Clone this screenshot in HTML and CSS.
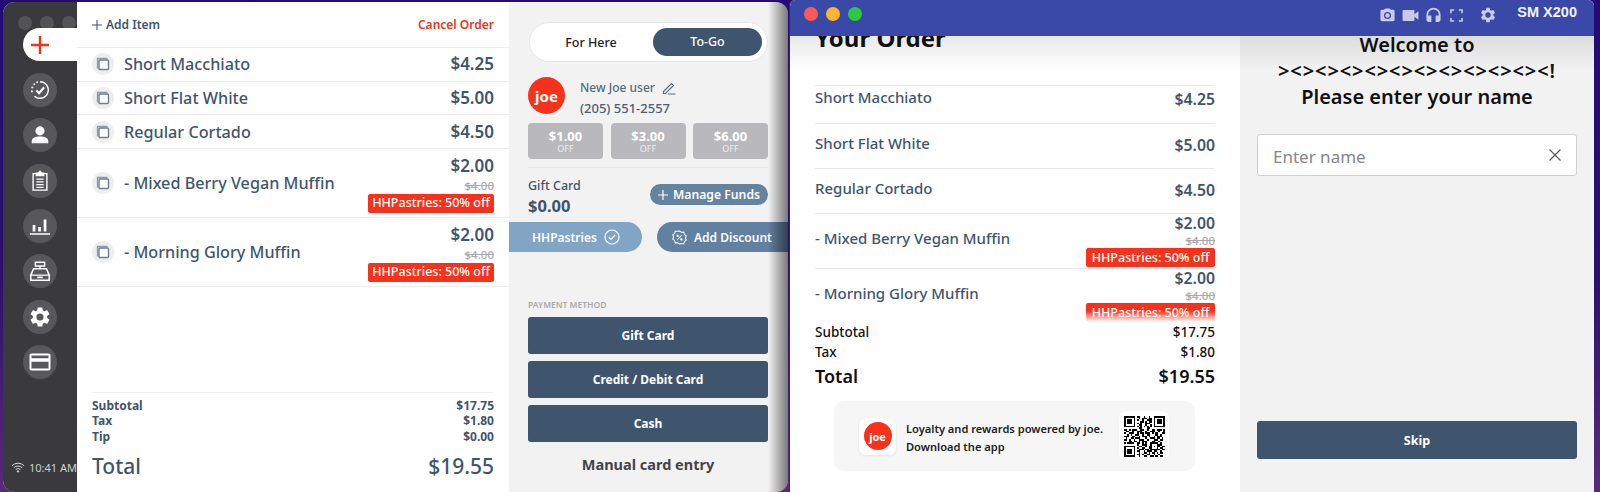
FILE: index.html
```html
<!DOCTYPE html>
<html lang="en">
<head>
<meta charset="utf-8">
<title>Joe POS</title>
<link rel="stylesheet" href="styles.css">
</head>
<body>
<div class="desktop">
  <section class="window pos">
    <nav class="rail">
      <div class="dots"><i></i><i></i><i></i></div>
      <div class="plus-tab"><svg viewBox="0 0 20 20" width="20" height="20"><path d="M10 1v18M1 10h18" stroke="#f5321c" stroke-width="2.4" fill="none"/></svg></div>
      <div class="rail-btns">
        <a class="rail-btn"><svg viewBox="0 0 24 24" width="22" height="22" fill="none" stroke="#fff" stroke-width="1.5"><path d="M12 3a9 9 0 1 1-6 15.7" /><path d="M3.2 13.5v-.1M3.6 9.2v-.1M5.8 5.8v-.1M9 3.6v-.1" stroke-width="2" stroke-linecap="round"/><path d="M8 12.5l3 3 5.5-6.5" stroke-width="2.2"/></svg></a>
        <a class="rail-btn"><svg viewBox="0 0 24 24" width="22" height="22" fill="#fff"><circle cx="12" cy="7.5" r="5"/><path d="M3 21v-2.5c0-3.500 4-5 9-5s9 1.500 9 5V21z"/></svg></a>
        <a class="rail-btn"><svg viewBox="0 0 24 24" width="22" height="22" fill="none" stroke="#fff" stroke-width="1.5"><path d="M8 4H4.500v18h15V4H16"/><path d="M8 6V3.500h2.200L12 1.500l1.800 2H16V6z" fill="#fff"/><path d="M8 10h8M8 13h8M8 16h8M8 19h8"/></svg></a>
        <a class="rail-btn"><svg viewBox="0 0 24 24" width="22" height="22" fill="#fff"><path d="M1 20h22v1.500H1zM4 11h3v7H4zM10 13h3v5h-3zM16 5h3v13h-3z"/></svg></a>
        <a class="rail-btn"><svg viewBox="0 0 24 24" width="22" height="22" fill="none" stroke="#fff" stroke-width="1.6"><path d="M7 2.500h10v4H7zM12 6.500v3M5 9.500h14l3 7H2zM2 16.500h20V22H2z"/><path d="M9 19h6" stroke-width="2"/></svg></a>
        <a class="rail-btn"><svg viewBox="0 0 24 24" width="24" height="24" fill="#fff"><path fill-rule="evenodd" d="M19.14 12.94c.04-.3.06-.61.06-.94 0-.32-.02-.64-.07-.94l2.03-1.58a.49.49 0 0 0 .12-.61l-1.92-3.32a.49.49 0 0 0-.59-.22l-2.39.96c-.5-.38-1.03-.7-1.62-.94l-.36-2.54a.48.48 0 0 0-.48-.41h-3.84c-.24 0-.43.17-.47.41l-.36 2.54c-.59.24-1.13.57-1.62.94l-2.39-.96a.49.49 0 0 0-.59.22L2.74 8.87c-.12.21-.08.47.12.61l2.03 1.58c-.05.3-.09.63-.09.94s.02.64.07.94l-2.03 1.58a.49.49 0 0 0-.12.61l1.92 3.32c.12.22.37.29.59.22l2.39-.96c.5.38 1.03.7 1.62.94l.36 2.54c.05.24.24.41.48.41h3.84c.24 0 .44-.17.47-.41l.36-2.54c.59-.24 1.13-.56 1.62-.94l2.39.96c.22.08.47 0 .59-.22l1.92-3.32a.47.47 0 0 0-.12-.61zM12 15.6A3.6 3.6 0 1 1 12 8.400a3.600 3.600 0 0 1 0 7.200z"/></svg></a>
        <a class="rail-btn"><svg viewBox="0 0 24 24" width="24" height="24" fill="none" stroke="#fff" stroke-width="2"><rect x="2.5" y="4.5" width="19" height="15" rx="1"/><path d="M2.500 10h19" stroke-width="3.5"/></svg></a>
      </div>
      <div class="status">
        <svg viewBox="0 0 16 12" width="14" height="11" fill="none" stroke="#ddd" stroke-width="1.1"><path d="M1 4a10 10 0 0 1 14 0M3.200 6.200a7 7 0 0 1 9.600 0M5.300 8.300a4 4 0 0 1 5.400 0"/><circle cx="8" cy="10.500" r=".8" fill="#ddd"/></svg>
        <span>10:41 AM</span>
      </div>
    </nav>

    <main class="ticket">
      <header class="ticket-head">
        <span class="add"><svg viewBox="0 0 11 11" width="10" height="10"><path d="M5.500 0v11M0 5.500h11" stroke="#3f556d" stroke-width="1.2" fill="none"/></svg>Add Item</span>
        <span class="cancel">Cancel Order</span>
      </header>
      <div class="t-row">
        <span class="copy"><svg viewBox="0 0 14 14" width="14" height="14" fill="none"><path d="M1.500 11.500V1.500h10" stroke="#8c99a6" stroke-width="1.3"/><rect x="3" y="3" width="9.500" height="9.500" rx="1" fill="#fff" stroke="#6d7f91" stroke-width="1.4"/></svg></span>
        <span class="t-name">Short Macchiato</span><span class="t-price">$4.25</span>
      </div>
      <div class="t-row">
        <span class="copy"><svg viewBox="0 0 14 14" width="14" height="14" fill="none"><path d="M1.500 11.500V1.500h10" stroke="#8c99a6" stroke-width="1.3"/><rect x="3" y="3" width="9.500" height="9.500" rx="1" fill="#fff" stroke="#6d7f91" stroke-width="1.4"/></svg></span>
        <span class="t-name">Short Flat White</span><span class="t-price">$5.00</span>
      </div>
      <div class="t-row">
        <span class="copy"><svg viewBox="0 0 14 14" width="14" height="14" fill="none"><path d="M1.500 11.500V1.500h10" stroke="#8c99a6" stroke-width="1.3"/><rect x="3" y="3" width="9.500" height="9.500" rx="1" fill="#fff" stroke="#6d7f91" stroke-width="1.4"/></svg></span>
        <span class="t-name">Regular Cortado</span><span class="t-price">$4.50</span>
      </div>
      <div class="t-row t-tall">
        <span class="copy"><svg viewBox="0 0 14 14" width="14" height="14" fill="none"><path d="M1.500 11.500V1.500h10" stroke="#8c99a6" stroke-width="1.3"/><rect x="3" y="3" width="9.500" height="9.500" rx="1" fill="#fff" stroke="#6d7f91" stroke-width="1.4"/></svg></span>
        <span class="t-name">- Mixed Berry Vegan Muffin</span>
        <div class="t-deal"><span class="t-price">$2.00</span><s>$4.00</s><span class="badge">HHPastries: 50% off</span></div>
      </div>
      <div class="t-row t-tall">
        <span class="copy"><svg viewBox="0 0 14 14" width="14" height="14" fill="none"><path d="M1.500 11.500V1.500h10" stroke="#8c99a6" stroke-width="1.3"/><rect x="3" y="3" width="9.500" height="9.500" rx="1" fill="#fff" stroke="#6d7f91" stroke-width="1.4"/></svg></span>
        <span class="t-name">- Morning Glory Muffin</span>
        <div class="t-deal"><span class="t-price">$2.00</span><s>$4.00</s><span class="badge">HHPastries: 50% off</span></div>
      </div>
      <div class="t-sum">
        <div class="sum-line"><span>Subtotal</span><span>$17.75</span></div>
        <div class="sum-line"><span>Tax</span><span>$1.80</span></div>
        <div class="sum-line"><span>Tip</span><span>$0.00</span></div>
        <div class="sum-total"><span>Total</span><span>$19.55</span></div>
      </div>
    </main>

    <aside class="side">
      <div class="toggle"><span class="tg">For Here</span><span class="tg tg-on">To-Go</span></div>
      <div class="user">
        <span class="joe joe-lg">joe</span>
        <div class="user-info">
          <div class="user-name">New Joe user <svg viewBox="0 0 14 14" width="14" height="14" fill="none" stroke="#566b80" stroke-width="1.1"><path d="M1.500 10.500 9.500 2.500l2 2-8 8H1.500zM6 13h7.500"/></svg></div>
          <div class="user-phone">(205) 551-2557</div>
        </div>
      </div>
      <div class="rewards">
        <div class="reward"><b>$1.00</b><small>OFF</small></div>
        <div class="reward"><b>$3.00</b><small>OFF</small></div>
        <div class="reward"><b>$6.00</b><small>OFF</small></div>
      </div>
      <div class="gift">
        <div><div class="gift-label">Gift Card</div><div class="gift-value">$0.00</div></div>
        <span class="manage"><svg viewBox="0 0 11 11" width="10" height="10"><path d="M5.500 0v11M0 5.500h11" stroke="#fff" stroke-width="1.3" fill="none"/></svg>Manage Funds</span>
      </div>
      <div class="promos">
        <span class="promo promo-on">HHPastries <svg viewBox="0 0 16 16" width="16" height="16" fill="none" stroke="#fff" stroke-width="1.2"><circle cx="8" cy="8" r="7"/><path d="M4.800 8.200l2.200 2.200 4.200-4.600"/></svg></span>
        <span class="promo promo-add"><svg viewBox="0 0 16 16" width="15" height="15" fill="none" stroke="#fff" stroke-width="1.1"><path d="M8 1l2 1.400 2.500-.1.700 2.400 2 1.500-.9 2.300.9 2.300-2 1.500-.7 2.400-2.500-.1L8 15l-2-1.400-2.500.1-.7-2.400-2-1.500.9-2.300-.9-2.300 2-1.500.7-2.400 2.500.1z"/><path d="M5.800 10.200l4.400-4.400"/><circle cx="6" cy="6" r=".7"/><circle cx="10" cy="10" r=".7"/></svg>Add Discount</span>
      </div>
      <div class="pay-label">PAYMENT METHOD</div>
      <div class="pay-list">
        <button class="pay">Gift Card</button>
        <button class="pay">Credit / Debit Card</button>
        <button class="pay">Cash</button>
      </div>
      <div class="manual">Manual card entry</div>
    </aside>
  </section>

  <section class="window customer">
    <header class="bar">
      <div class="lights"><i class="l-red"></i><i class="l-amber"></i><i class="l-green"></i></div>
      <div class="tools">
        <svg class="tool" viewBox="0 0 24 24" width="17" height="17"><path fill-rule="evenodd" d="M9 2 7.170 4H4a2 2 0 0 0-2 2v12a2 2 0 0 0 2 2h16a2 2 0 0 0 2-2V6a2 2 0 0 0-2-2h-3.170L15 2zm3 15a5 5 0 1 1 0-10 5 5 0 0 1 0 10zm0-1.800a3.200 3.200 0 1 0 0-6.400 3.200 3.200 0 0 0 0 6.400z"/></svg>
        <svg class="tool" viewBox="0 0 24 24" width="19" height="19"><path d="M17 10.500V6a1 1 0 0 0-1-1H3a1 1 0 0 0-1 1v12a1 1 0 0 0 1 1h13a1 1 0 0 0 1-1v-4.500l5 4v-11z"/></svg>
        <svg class="tool" viewBox="0 0 24 24" width="17" height="17"><path d="M12 1a10 10 0 0 0-10 10v7a3 3 0 0 0 3 3h4v-9H4.500v-1a7.500 7.500 0 0 1 15 0v1H15v9h4a3 3 0 0 0 3-3v-7A10 10 0 0 0 12 1z"/></svg>
        <svg class="tool" viewBox="0 0 24 24" width="19" height="19"><path d="M6 15H4v5h5v-2H6zM4 9h2V6h3V4H4zm14 9h-3v2h5v-5h-2zM15 4v2h3v3h2V4z"/></svg>
        <svg class="tool tool-gear" viewBox="0 0 24 24" width="18" height="18"><path fill-rule="evenodd" d="M19.14 12.94c.04-.3.06-.61.06-.94 0-.32-.02-.64-.07-.94l2.03-1.58a.49.49 0 0 0 .12-.61l-1.92-3.32a.49.49 0 0 0-.59-.22l-2.39.96c-.5-.38-1.03-.7-1.62-.94l-.36-2.54a.48.48 0 0 0-.48-.41h-3.84c-.24 0-.43.17-.47.41l-.36 2.54c-.59.24-1.13.57-1.62.94l-2.39-.96a.49.49 0 0 0-.59.22L2.74 8.87c-.12.21-.08.47.12.61l2.03 1.58c-.05.3-.09.63-.09.94s.02.64.07.94l-2.03 1.58a.49.49 0 0 0-.12.61l1.92 3.32c.12.22.37.29.59.22l2.39-.96c.5.38 1.03.7 1.62.94l.36 2.54c.05.24.24.41.48.41h3.84c.24 0 .44-.17.47-.41l.36-2.54c.59-.24 1.13-.56 1.62-.94l2.39.96c.22.08.47 0 .59-.22l1.92-3.32a.47.47 0 0 0-.12-.61zM12 15.600A3.600 3.600 0 1 1 12 8.400a3.600 3.600 0 0 1 0 7.200z"/></svg>
        <span class="device">SM X200</span>
      </div>
    </header>
    <div class="panes">
      <div class="order">
        <h1>Your Order</h1>
        <div class="o-list">
          <div class="o-row o-first"><span>Short Macchiato</span><span class="o-price">$4.25</span></div>
          <div class="o-row"><span>Short Flat White</span><span class="o-price">$5.00</span></div>
          <div class="o-row"><span>Regular Cortado</span><span class="o-price">$4.50</span></div>
          <div class="o-row o-deal o-deal-a"><span class="o-dname">- Mixed Berry Vegan Muffin</span>
            <div class="o-dcol"><span class="o-price">$2.00</span><s>$4.00</s><span class="badge">HHPastries: 50% off</span></div></div>
          <div class="o-row o-deal"><span class="o-dname">- Morning Glory Muffin</span>
            <div class="o-dcol"><span class="o-price">$2.00</span><s>$4.00</s><span class="badge">HHPastries: 50% off</span></div></div>
        </div>
        <div class="o-line"><span>Subtotal</span><span>$17.75</span></div>
        <div class="o-line"><span>Tax</span><span>$1.80</span></div>
        <div class="o-total"><span>Total</span><span>$19.55</span></div>
        <div class="promo-card">
          <span class="tile"><span class="joe joe-sm">joe</span></span>
          <p>Loyalty and rewards powered by joe.<br>Download the app</p>
          <span class="qr"><svg viewBox="0 0 25 25" width="41" height="41" shape-rendering="crispEdges"><path fill-rule="evenodd" d="M0 0h7v7H0zM1 1v5h5V1zM2 2h3v3H2zM18 0h7v7h-7zM19 1v5h5V1zM20 2h3v3h-3zM0 18h7v7H0zM1 19v5h5v-5zM2 20h3v3H2zM16 16h5v5h-5zM17 17v3h3v-3zM18 18h1v1h-1z"/><path stroke="#000" stroke-width="1" fill="none" d="M8 .5h2m2 0h1m2 0h1M9 1.500h1m1 0h3m1 0h2M8 2.500h1m2 0h1m2 0h3M10 3.500h2m1 0h1m1 0h2M8 4.500h1m1 0h1m2 0h3M9 5.500h2m2 0h1m2 0h1M8 6.500h1m1 0h1m1 0h1m1 0h1m1 0h1M9 7.500h2m3 0h2M0 8.500h2m1 0h1m1 0h3m2 0h2m2 0h1m2 0h2m1 0h3m1 0h1M1 9.500h2m2 0h1m2 0h3m2 0h1m2 0h3m2 0h1m2 0h2M0 10.500h1m2 0h3m2 0h1m1 0h2m1 0h3m1 0h1m1 0h2m2 0h2M2 11.500h1m1 0h1m2 0h2m2 0h1m2 0h2m3 0h2m1 0h1M0 12.500h3m2 0h2m2 0h1m1 0h3m1 0h1m2 0h1m1 0h3M1 13.500h1m2 0h2m1 0h3m3 0h1m2 0h3m1 0h2m1 0h1M0 14.500h2m1 0h1m2 0h1m2 0h3m2 0h1m3 0h3m1 0h2M3 15.500h2m1 0h2m1 0h1m1 0h3m3 0h2m2 0h1M0 16.500h1m1 0h4m2 0h2m1 0h1m1 0h1m6 0h1m1 0h1M8 17.500h1m2 0h3m7 0h2M9 18.500h2m2 0h1m1 0h1m5 0h1m1 0h2M8 19.500h1m2 0h2m2 0h1m6 0h2M9 20.500h3m1 0h2m6 0h1m1 0h2M8 21.500h2m2 0h1m1 0h3m1 0h2m2 0h1M9 22.500h1m2 0h2m1 0h1m1 0h2m1 0h1m1 0h2M8 23.500h2m1 0h1m2 0h2m2 0h1m2 0h1M9 24.500h1m2 0h2m2 0h2m1 0h2m1 0h2"/></svg></span>
        </div>
      </div>
      <div class="welcome">
        <h2><span class="w-first">Welcome to</span><span class="w-fish">&gt;&lt;&gt;&lt;&gt;&lt;&gt;&lt;&gt;&lt;&gt;&lt;&gt;&lt;&gt;&lt;&gt;&lt;&gt;&lt;&gt;&lt;!</span><span class="w-line">Please enter your name</span></h2>
        <div class="field"><span>Enter name</span><svg viewBox="0 0 12 12" width="12" height="12"><path d="M.5.5l11 11M11.500.5l-11 11" stroke="#555" stroke-width="1.1" fill="none"/></svg></div>
        <button class="skip">Skip</button>
      </div>
    </div>
  </section>
</div>
</body>
</html>
```
FILE: styles.css
```css
* { box-sizing: border-box; }
html, body { margin: 0; height: 100%; }
body { font-family: "Noto Sans", "Liberation Sans", sans-serif; color: #3f556d; overflow: hidden; }
.desktop { position: relative; width: 1600px; height: 492px; overflow: hidden; background: linear-gradient(180deg, #240a78 0%, #2a0f70 55%, #5a2a7c 100%); }
.window { position: absolute; overflow: hidden; }

/* left POS window */
.pos { left: 3px; top: 2px; width: 785px; height: 490px; border-radius: 12px; display: flex; background: #f2f2f2; }
.pos::after { content: ""; position: absolute; top: 0; right: 0; bottom: 0; width: 20px; background: linear-gradient(90deg, rgba(0,0,0,0), rgba(0,0,0,.5)); pointer-events: none; }
.rail { width: 74px; flex: none; background: #3a393e; display: flex; flex-direction: column; padding-top: 14px; }
.dots { display: flex; gap: 8px; padding-left: 15px; margin-bottom: -2px; white-space: nowrap; }
.dots i { flex: none; width: 14px; height: 14px; border-radius: 50%; background: #545358; }
.plus-tab { margin-left: 20px; height: 33px; background: #fff; border-radius: 17px 0 0 17px; display: flex; align-items: center; padding-left: 7px; position: relative; }
.rail-btns { display: flex; flex-direction: column; gap: 11.33px; margin-top: 12px; }
.rail-btn { width: 34px; height: 34px; margin-left: 20px; border-radius: 50%; background: #58575c; display: flex; align-items: center; justify-content: center; }
.status { margin-top: auto; padding: 0 0 18px 8px; display: flex; align-items: center; gap: 4px; height: 32px; white-space: nowrap; color: #d0d0d2; font-size: 11px; }

.ticket { width: 432px; flex: none; background: #fff; display: flex; flex-direction: column; }
.ticket-head { height: 46px; flex: none; padding: 0 15px; display: flex; justify-content: space-between; align-items: center; border-bottom: 1.5px solid #ececec; font-size: 12px; font-weight: 600; }
.add { display: flex; align-items: center; gap: 4px; }
.cancel { color: #e8351f; }
.t-row { height: 33.7px; flex: none; padding: 0 15px; display: flex; align-items: center; border-bottom: 1.5px solid #ececec; }
.t-tall { height: 69px; }
.copy { width: 22px; height: 22px; flex: none; border-radius: 50%; background: #eeeeee; display: flex; align-items: center; justify-content: center; margin-right: 10px; }
.t-name { flex: 1; font-size: 16.2px; font-weight: 500; white-space: nowrap; }
.t-price { font-size: 17px; font-weight: 600; line-height: 22px; }
.t-deal { display: flex; flex-direction: column; align-items: flex-end; align-self: flex-start; padding-top: 6px; }
.t-deal s { font-size: 11.5px; color: #a9a9ad; line-height: 17px; font-weight: 500; }
.badge { background: #f6321c; color: #fff; border-radius: 2px; white-space: nowrap; font-weight: 500; }
.t-deal .badge { height: 18.5px; line-height: 18.5px; width: 126px; text-align: center; font-size: 12.5px; }
.t-sum { margin: auto 15px 0; border-top: 1px solid #eeeeee; padding: 5px 0 12px; }
.sum-line { display: flex; justify-content: space-between; font-size: 12px; font-weight: 700; line-height: 15.5px; }
.sum-total { display: flex; justify-content: space-between; font-size: 21px; font-weight: 500; line-height: 28px; margin-top: 8px; }

.side { flex: 1; min-width: 0; padding: 20px 0 0 19px; }
.side > * { width: 240px; }
.toggle { height: 40px; margin-left: 1px; width: 239px; border: 1.5px solid #e6e6e6; border-radius: 20px; background: #fff; display: flex; align-items: center; padding: 0 5px 0 14px; }
.tg { flex: 1; text-align: center; font-size: 12.5px; color: #222; font-weight: 500; }
.tg-on { flex: none; width: 109px; height: 28px; line-height: 28px; border-radius: 14px; background: #3f556d; color: #fff; margin-left: 15px; }
.user { display: flex; align-items: center; margin-top: 15px; height: 37px; }
.joe { border-radius: 50%; background: #f6321c; color: #fff; font-weight: 700; display: flex; align-items: center; justify-content: center; flex: none; }
.joe-lg { width: 37px; height: 37px; font-size: 15px; }
.user-info { margin-left: 15px; padding-top: 6px; }
.user-name { font-size: 12px; font-weight: 500; color: #566b80; line-height: 20px; display: flex; align-items: center; gap: 7px; }
.user-phone { font-size: 13px; color: #4a5f75; line-height: 21px; font-weight: 500; }
.rewards { display: flex; justify-content: space-between; margin-top: 9px; }
.reward { width: 75px; height: 36px; border-radius: 4px; background: #b9b8bc; color: #fff; display: flex; flex-direction: column; align-items: center; justify-content: center; padding-top: 1px; }
.reward b { font-size: 13px; line-height: 14px; font-weight: 700; }
.reward small { font-size: 9px; line-height: 11px; color: #eee; }
.gift { margin-top: 8px; border-top: 1px solid #e6e6e6; padding-top: 9px; display: flex; justify-content: space-between; align-items: center; height: 49px; }
.gift-label { font-size: 12.5px; line-height: 18px; font-weight: 500; }
.gift-value { font-size: 16.5px; font-weight: 700; line-height: 22px; }
.manage { width: 118px; height: 21px; margin-top: -4px; border-radius: 11px; background: #65829f; color: #fff; font-size: 12.2px; font-weight: 600; display: flex; align-items: center; justify-content: center; gap: 5px; white-space: nowrap; }
.promos { display: flex; margin: 6px 0 0 -19px; width: 300px; }
.promo { height: 30px; flex: none; color: #fff; font-size: 12px; font-weight: 600; display: flex; align-items: center; white-space: nowrap; }
.promo-on { width: 133px; background: #82a5c6; border-radius: 0 15px 15px 0; padding-left: 23px; gap: 7px; }
.promo-add { width: 160px; margin-left: 15px; background: #62809f; border-radius: 15px 0 0 15px; padding-left: 15px; gap: 7px; }
.pay-label { margin-top: 47px; font-size: 8.5px; line-height: 12px; color: #a8a8ac; font-weight: 600; }
.pay-list { margin-top: 6px; display: flex; flex-direction: column; gap: 7.5px; }
.pay { height: 36.5px; border: 0; border-radius: 3px; background: #3f556d; color: #fff; font: 700 12px "Noto Sans", "Liberation Sans", sans-serif; }
.manual { margin-top: 12px; line-height: 20px; text-align: center; font-size: 14.5px; font-weight: 700; color: #444448; }

/* right customer window */
.customer { left: 789px; top: 0; width: 805px; height: 492px; border-radius: 6px 6px 0 0; background: #fff; border-left: 1px solid #333; display: flex; flex-direction: column; }
.bar { height: 36px; flex: none; background: #3a48a8; display: flex; justify-content: space-between; padding: 7px 17px 0 14px; position: relative; z-index: 2; }
.lights { display: flex; gap: 8px; }
.lights i { width: 14px; height: 14px; border-radius: 50%; }
.l-red { background: #fa5a56; }
.l-amber { background: #fdb52a; }
.l-green { background: #2bc840; }
.tools { display: flex; align-items: center; height: 16px; margin-top: -2px; }
.tool { fill: #c6cbe8; margin-left: 5px; margin-top: 4px; }
.tool-gear { margin-left: 13px; }
.device { margin-left: 20px; font: 700 14.5px "Liberation Sans", sans-serif; color: #f2f3fb; margin-top: -3px; }
.panes { flex: 1; min-height: 0; display: flex; position: relative; }
.panes::before { content: ""; position: absolute; left: 0; right: 0; top: 0; height: 34px; background: linear-gradient(180deg, rgba(0,0,0,.09), rgba(0,0,0,0)); pointer-events: none; z-index: 1; }
.order { width: 450px; flex: none; background: #fff; padding: 0 25px; overflow: hidden; }
.order h1 { margin: -14px 0 0; font-size: 24px; line-height: 31px; font-weight: 700; color: #111; }
.o-list { margin-top: 32px; height: 237px; overflow: hidden; position: relative; }
.o-list::after { content: ""; position: absolute; left: 0; right: 0; bottom: 0; height: 11px; background: linear-gradient(180deg, rgba(255,255,255,0), #fff); }
.o-row { display: flex; justify-content: space-between; border-top: 1.5px solid #e8e8e8; height: 45px; padding-top: 9px; font-size: 15px; font-weight: 500; line-height: 20px; white-space: nowrap; }
.o-first { height: 38px; padding-top: 1px; }
.o-price { font-size: 15.8px; font-weight: 600; margin-top: 2px; }
.o-deal { height: 54px; padding-top: 0; }
.o-deal-a { height: 55px; padding-top: 0; }
.o-dname { align-self: center; margin-top: -6px; }
.o-dcol { display: flex; flex-direction: column; align-items: flex-end; margin-top: -1px; }
.o-dcol .o-price { margin-top: 0; line-height: 20px; }
.o-dcol s { font-size: 11.5px; line-height: 14px; color: #a9a9ad; margin-top: 1px; }
.o-dcol .badge { width: 129px; height: 19px; line-height: 19px; text-align: center; font-size: 12.5px; }
.o-line { display: flex; justify-content: space-between; color: #111; font-size: 13.5px; font-weight: 500; line-height: 20px; }
.o-total { display: flex; justify-content: space-between; color: #111; font-size: 18px; font-weight: 600; line-height: 28px; }
.promo-card { margin: 11px 0 0 19px; width: 361px; height: 70px; border-radius: 10px; background: #f6f6f6; display: flex; align-items: center; padding-left: 25px; position: relative; }
.tile { width: 37px; height: 37px; flex: none; background: #fff; border-radius: 7px; box-shadow: 0 1px 3px rgba(0,0,0,.08); display: flex; align-items: center; justify-content: center; }
.joe-sm { width: 28px; height: 28px; font-size: 11px; }
.promo-card p { margin: 4px 0 0 10px; flex: 1; font-size: 11.1px; font-weight: 600; line-height: 18px; color: #222; white-space: nowrap; }
.qr { width: 50px; height: 50px; flex: none; margin-right: 26px; background: #fff; border-radius: 8px; display: flex; align-items: center; justify-content: center; }
.welcome { flex: 1; background: #f2f2f2; padding: 0 17px 33px; display: flex; flex-direction: column; overflow: hidden; }
.welcome h2 { margin: 0; text-align: center; font-size: 20px; line-height: 26px; font-weight: 600; color: #111; white-space: nowrap; }
.w-first { display: block; line-height: 18px; }
.w-fish { display: block; letter-spacing: .9px; margin-top: 4px; }
.w-line { display: block; }
.field { margin-top: 24px; height: 42px; background: #fff; border: 1.5px solid #d0d0d0; border-radius: 3px; display: flex; align-items: center; justify-content: space-between; padding: 0 15px; color: #85858a; font-size: 17px; flex: none; }
.field span { padding-top: 3px; }
.skip { margin-top: auto; height: 38px; border: 0; border-radius: 3px; background: #3f556d; color: #fff; font: 700 12.5px "Noto Sans", "Liberation Sans", sans-serif; flex: none; }
```
